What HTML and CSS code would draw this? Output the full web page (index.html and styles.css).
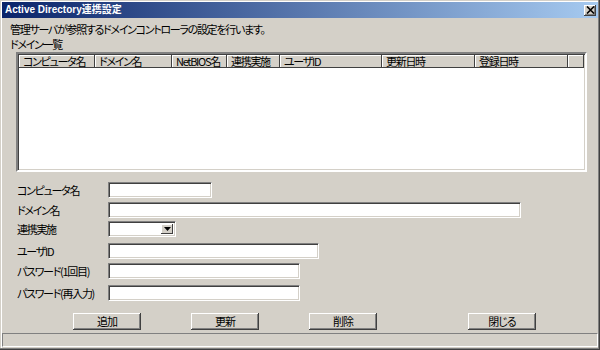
FILE: index.html
```html
<!DOCTYPE html>
<html lang="ja">
<head>
    <meta charset="UTF-8">
    <title>Active Directory連携設定</title>
    <link rel="stylesheet" href="styles.css">
</head>
<body>
    <div class="window">
        <!-- タイトルバー -->
        <div class="titlebar">
            <span class="title">Active Directory連携設定</span>
            <span class="close">
                <svg width="9" height="8" viewBox="0 0 9 8">
                    <path d="M1 0.5 L8 7.5 M8 0.5 L1 7.5" stroke="#000" stroke-width="1.6"/>
                </svg>
            </span>
        </div>

        <div class="intro">
            <div>管理サーバが参照するドメインコントローラの設定を行います。</div>
            <div>ドメイン一覧</div>
        </div>

        <!-- ドメイン一覧 -->
        <div class="list">
            <div class="list-header">
                <div class="col c1">コンピュータ名</div>
                <div class="col c2">ドメイン名</div>
                <div class="col c3">NetBIOS名</div>
                <div class="col c4">連携実施</div>
                <div class="col c5">ユーザID</div>
                <div class="col c6">更新日時</div>
                <div class="col c7">登録日時</div>
                <div class="col c8"></div>
            </div>
        </div>

        <!-- 入力欄 -->
        <div class="form">
            <label>コンピュータ名</label>
            <div class="field w-computer"></div>
            <label>ドメイン名</label>
            <div class="field w-domain"></div>
            <label>連携実施</label>
            <div class="field select">
                <span class="arrow">
                    <svg width="7" height="4" viewBox="0 0 7 4"><path d="M0 0 H7 L3.5 4 Z" fill="#000"/></svg>
                </span>
            </div>
            <label>ユーザID</label>
            <div class="field w-user"></div>
            <label>パスワード(1回目)</label>
            <div class="field w-pass"></div>
            <label>パスワード(再入力)</label>
            <div class="field w-pass"></div>
        </div>

        <div class="buttons">
            <button class="btn">追加</button>
            <button class="btn">更新</button>
            <button class="btn">削除</button>
            <button class="btn btn-close">閉じる</button>
        </div>

        <div class="statusbar"></div>
    </div>
</body>
</html>
```

FILE: styles.css
```css
body {
    margin: 0;
    font-family: "Noto Sans CJK JP", "Liberation Sans", sans-serif;
    font-size: 11px;
    letter-spacing: -1.3px;
    font-feature-settings: "palt";
    color: #000;
}
.window {
    width: 600px;
    height: 350px;
    box-sizing: border-box;
    padding: 2px;
    background-color: #d4d0c8;
    box-shadow: inset -1px -1px #404040, inset -2px -2px #808080, inset 1px 1px #d4d0c8, inset 2px 2px #fff;
}
.titlebar {
    height: 16px;
    display: flex;
    align-items: center;
    justify-content: space-between;
    padding: 0 2px 0 3px;
    background: linear-gradient(to right, #0a246a, #a6caf0);
}
.title {
    color: #fff;
    font-weight: bold;
    font-family: "Liberation Sans", "Noto Sans CJK JP", sans-serif;
    font-size: 10px;
    letter-spacing: 0;
    line-height: 16px;
}
.close {
    width: 12px;
    height: 11px;
    display: flex;
    align-items: center;
    justify-content: center;
    background-color: #d4d0c8;
    box-shadow: inset -1px -1px #404040, inset 1px 1px #fff, inset -2px -2px #808080;
}
.intro {
    margin: 4px 0 0 8px;
    line-height: 15px;
}
.list {
    margin-left: 14px;
    width: 571px;
    height: 120px;
    box-sizing: border-box;
    border: 2px solid;
    border-color: #808080 #fff #fff #808080;
    box-shadow: inset 1px 1px #404040, inset -1px -1px #d4d0c8;
    background-color: #fff;
    padding: 1px 1px 0 1px;
}
.list-header {
    display: flex;
    height: 13px;
}
.col {
    box-sizing: border-box;
    height: 13px;
    line-height: 13px;
    padding-left: 4px;
    background-color: #d4d0c8;
    box-shadow: inset -1px -1px #404040, inset 1px 1px #fff;
    white-space: nowrap;
}
.c1 { width: 76px; }
.c2 { width: 77px; }
.c3 { width: 55px; }
.c4 { width: 53px; }
.c5 { width: 102px; }
.c6 { width: 93px; }
.c7 { width: 93px; }
.c8 { flex: 1; }
.form {
    display: grid;
    grid-template-columns: 91px auto;
    grid-template-rows: 20px 19px 22px 20px 22px 16px;
    margin: 10px 0 0 15px;
    align-items: start;
}
.form label {
    height: 16px;
    line-height: 16px;
    white-space: nowrap;
}
.field {
    height: 16px;
    box-sizing: border-box;
    background-color: #fff;
    border: 1px solid;
    border-color: #808080 #fff #fff #808080;
    box-shadow: inset 1px 1px #404040, inset -1px -1px #d4d0c8;
}
.w-computer { width: 104px; }
.w-domain { width: 413px; }
.w-user { width: 211px; }
.w-pass { width: 192px; }
.select {
    width: 68px;
    display: flex;
    justify-content: flex-end;
    padding: 2px;
}
.arrow {
    width: 12px;
    height: 10px;
    display: flex;
    align-items: center;
    justify-content: center;
    background-color: #d4d0c8;
    box-shadow: inset -1px -1px #404040, inset 1px 1px #fff;
}
.buttons {
    display: flex;
    gap: 50px;
    margin: 12px 0 0 71px;
}
.btn {
    width: 68px;
    height: 17px;
    padding: 0;
    border: none;
    background-color: #d4d0c8;
    font-family: inherit;
    font-size: 11px;
    letter-spacing: -1px;
    font-feature-settings: "palt";
    line-height: 15px;
    color: #000;
    box-shadow: inset -1px -1px #404040, inset 1px 1px #fff, inset -2px -2px #808080;
}
.btn-close {
    margin-left: 41px;
}
.statusbar {
    margin-top: 3px;
    height: 14px;
    box-sizing: border-box;
    border: 1px solid;
    border-color: #808080 #fff #fff #808080;
}
```
